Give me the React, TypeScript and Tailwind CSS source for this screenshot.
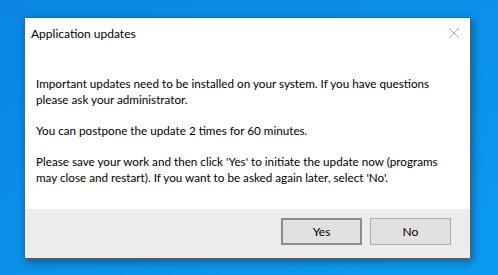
import React from "react";

// Windows-style confirmation dialog over a blue desktop
export default function App() {
  return (
    <div className="h-[275px] w-[498px] overflow-hidden bg-gradient-to-br from-[#0a86e2] to-[#0c9bf2] pl-[24px] pt-[17px] font-['Lato',sans-serif] text-black">
      <div className="flex h-[242px] w-[447px] flex-col border border-[#4f6272] bg-white shadow-[2px_3px_8px_rgba(0,0,0,0.35)]">
        {/* Title bar */}
        <div className="flex h-[42px] items-start justify-between pl-[6px] pr-[10px] pt-[7px]">
          <span className="text-[12px] leading-[18px]">Application updates</span>
          <CloseIcon />
        </div>

        {/* Message */}
        <div className="flex flex-1 flex-col gap-[15px] whitespace-nowrap pl-[11px] pt-[15px] text-[11.7px] leading-[16px]">
          <p>
            Important updates need to be installed on your system. If you have questions
            <br />
            please ask your administrator.
          </p>
          <p>You can postpone the update 2 times for 60 minutes.</p>
          <p>
            Please save your work and then click 'Yes' to initiate the update now (programs
            <br />
            may close and restart). If you want to be asked again later, select 'No'.
          </p>
        </div>

        {/* Buttons */}
        <div className="flex h-[49px] justify-end gap-[8px] bg-[#ececec] pr-[19px] pt-[9px]">
          <button className="h-[27px] w-[81px] border-2 border-[#8c8c8c] bg-[#e1e1e1] text-[12px]">
            Yes
          </button>
          <button className="h-[27px] w-[81px] border border-[#adadad] bg-[#e1e1e1] text-[12px]">
            No
          </button>
        </div>
      </div>
    </div>
  );
}

function CloseIcon() {
  return (
    <svg width="12" height="12" viewBox="0 0 12 12" className="mt-[2px]">
      <path d="M1 1 L11 11 M11 1 L1 11" stroke="#b4b4b4" strokeWidth="1" fill="none" />
    </svg>
  );
}
